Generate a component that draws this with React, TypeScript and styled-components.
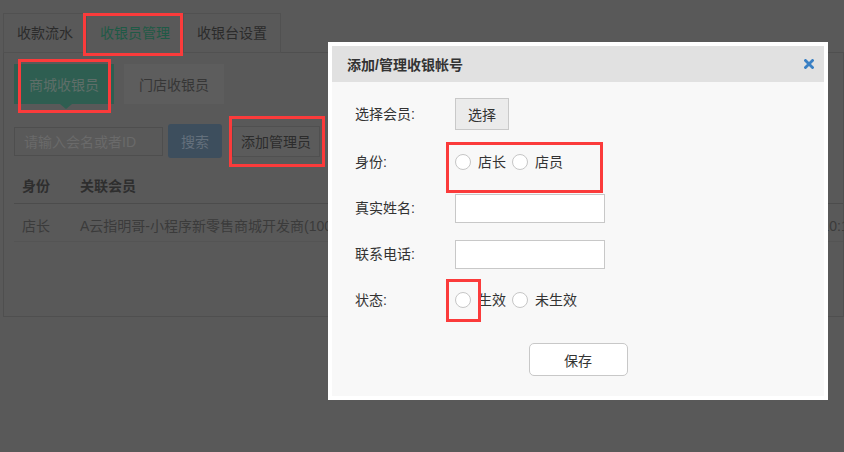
import React from "react";
import styled, { createGlobalStyle } from "styled-components";

const Global = createGlobalStyle`
  html, body { margin: 0; padding: 0; }
  body {
    width: 844px;
    height: 452px;
    overflow: hidden;
    background: #595959;
    font-family: "Liberation Sans", "Noto Sans CJK SC", sans-serif;
    font-size: 14px;
    color: #333;
  }
  * { box-sizing: border-box; }
`;

const Page = styled.div`
  position: relative;
  width: 844px;
  height: 452px;
  padding: 13px 0 0 3px;
`;

const TabBar = styled.div`
  display: flex;
  height: 40px;
  border-bottom: 1px solid #4f4f4f;
`;

const Tab = styled.div<{ $active?: boolean }>`
  height: 40px;
  padding: 0 13px;
  display: flex;
  align-items: center;
  border: 1px solid #515151;
  border-bottom-color: ${(p) => (p.$active ? "#595959" : "#515151")};
  margin-right: -1px;
  color: ${(p) => (p.$active ? "#1f5a46" : "#2b2b2b")};
  line-height: 16px;
`;

const Panel = styled.div`
  border: 1px solid #4f4f4f;
  border-top: none;
  height: 264px;
  padding: 11px 0 0 10px;
`;

const SubTabs = styled.div`
  display: flex;
  gap: 10px;
  margin-bottom: 20px;
`;

const SubTab = styled.div<{ $active?: boolean }>`
  position: relative;
  width: 100px;
  height: 40px;
  display: flex;
  align-items: center;
  justify-content: center;
  background: ${(p) => (p.$active ? "#2e5e51" : "#5d5d5d")};
  color: ${(p) => (p.$active ? "#5f6e69" : "#363636")};
  ${(p) =>
    p.$active &&
    `&::after {
      content: "";
      position: absolute;
      left: 46px;
      bottom: -5px;
      border-left: 6px solid transparent;
      border-right: 6px solid transparent;
      border-top: 5px solid #2e5e51;
    }`}
`;

const SearchRow = styled.div`
  display: flex;
  align-items: center;
  height: 34px;
`;

const SearchInput = styled.div`
  width: 149px;
  height: 29px;
  border: 1px solid #4e4e4e;
  padding: 0 9px;
  display: flex;
  align-items: center;
  color: #6a6a6a;
  font-size: 14px;
  margin-right: 5px;
`;

const SearchButton = styled.div`
  width: 54px;
  height: 34px;
  border-radius: 3px;
  background: #3d4e5d;
  color: #64707c;
  display: flex;
  align-items: center;
  justify-content: center;
  margin-right: 10px;
`;

const AddButton = styled.div`
  width: 88px;
  height: 31px;
  border: 1px solid #505050;
  background: #5b5b5b;
  color: #2c2c2c;
  display: flex;
  align-items: center;
  justify-content: center;
`;

const Table = styled.div`
  margin-top: 11px;
  width: 100%;
`;

const TRow = styled.div<{ $head?: boolean }>`
  display: grid;
  grid-template-columns: 58px 666px 1fr;
  height: ${(p) => (p.$head ? "35px" : "38px")};
  align-items: ${(p) => (p.$head ? "center" : "start")};
  padding-top: ${(p) => (p.$head ? "0" : "14px")};
  border-bottom: 1px solid ${(p) => (p.$head ? "#4c4c4c" : "#545454")};
  font-weight: ${(p) => (p.$head ? 700 : 400)};
  color: ${(p) => (p.$head ? "#2e2e2e" : "#3b3b3b")};
  line-height: 16px;
  white-space: nowrap;
`;

const Cell = styled.div`
  padding-left: 8px;
  overflow: visible;
`;

/* ---------- Modal ---------- */

const Modal = styled.div`
  position: absolute;
  left: 328px;
  top: 42px;
  width: 500px;
  height: 358px;
  background: #ffffff;
  padding: 4px;
`;

const ModalInner = styled.div`
  height: 100%;
  background: #f8f8f8;
  display: flex;
  flex-direction: column;
`;

const ModalHeader = styled.div`
  height: 36px;
  background: #e1e1e1;
  display: flex;
  align-items: center;
  justify-content: space-between;
  padding: 0 10px 0 15px;
`;

const ModalTitle = styled.div`
  font-weight: 700;
  font-size: 14px;
  color: #333;
`;

const Close = styled.svg`
  display: block;
  width: 10px;
  height: 10px;
`;

const Form = styled.div`
  padding: 16px 0 0 23px;
  display: flex;
  flex-direction: column;
  gap: 14px;
`;

const FormRow = styled.div<{ $extra?: number }>`
  display: flex;
  align-items: center;
  height: 32px;
  margin-bottom: ${(p) => p.$extra ?? 0}px;
`;

const Label = styled.div`
  width: 100px;
  color: #333;
  line-height: 16px;
`;

const PickButton = styled.div`
  width: 54px;
  height: 32px;
  border: 1px solid #c9c9c9;
  background: #ebebeb;
  display: flex;
  align-items: center;
  justify-content: center;
  color: #333;
`;

const TextInput = styled.div`
  width: 150px;
  height: 29px;
  background: #fff;
  border: 1px solid #c8c8c8;
`;

const RadioGroup = styled.div`
  display: flex;
  align-items: center;
`;

const Radio = styled.span<{ $first?: boolean }>`
  width: 16px;
  height: 16px;
  border-radius: 50%;
  border: 1px solid #c6c6c6;
  background: #fff;
  margin-left: ${(p) => (p.$first ? "0" : "6px")};
  margin-right: 7px;
  flex: none;
`;

const RadioText = styled.span`
  color: #333;
  line-height: 16px;
`;

const Footer = styled.div`
  display: flex;
  justify-content: center;
  margin-top: 27px;
`;

const SaveButton = styled.div`
  width: 99px;
  height: 33px;
  background: #fff;
  border: 1px solid #c8c8c8;
  border-radius: 5px;
  display: flex;
  align-items: center;
  justify-content: center;
  color: #333;
`;

/* ---------- Annotations ---------- */

const Mark = styled.div<{ $x: number; $y: number; $w: number; $h: number }>`
  position: absolute;
  left: ${(p) => p.$x}px;
  top: ${(p) => p.$y}px;
  width: ${(p) => p.$w}px;
  height: ${(p) => p.$h}px;
  border: 3px solid #fb3b3b;
  pointer-events: none;
`;

export default function App() {
  return (
    <>
      <Global />
      <Page>
        <TabBar>
          <Tab>收款流水</Tab>
          <Tab $active>收银员管理</Tab>
          <Tab>收银台设置</Tab>
        </TabBar>
        <Panel>
          <SubTabs>
            <SubTab $active>商城收银员</SubTab>
            <SubTab>门店收银员</SubTab>
          </SubTabs>
          <SearchRow>
            <SearchInput>请输入会名或者ID</SearchInput>
            <SearchButton>搜索</SearchButton>
            <AddButton>添加管理员</AddButton>
          </SearchRow>
          <Table>
            <TRow $head>
              <Cell>身份</Cell>
              <Cell>关联会员</Cell>
              <Cell></Cell>
            </TRow>
            <TRow>
              <Cell>店长</Cell>
              <Cell>A云指明哥-小程序新零售商城开发商(10086)</Cell>
              <Cell>2019-05-28 10:12:36</Cell>
            </TRow>
          </Table>
        </Panel>

        <Modal>
          <ModalInner>
            <ModalHeader>
              <ModalTitle>添加/管理收银帐号</ModalTitle>
              <Close viewBox="0 0 10 10">
                <path d="M1.5 1.5 L8.5 8.5 M8.5 1.5 L1.5 8.5" stroke="#3a80c4" strokeWidth="2.8" strokeLinecap="square" />
              </Close>
            </ModalHeader>
            <Form>
              <FormRow $extra={2}>
                <Label>选择会员:</Label>
                <PickButton>选择</PickButton>
              </FormRow>
              <FormRow>
                <Label>身份:</Label>
                <RadioGroup>
                  <Radio $first />
                  <RadioText>店长</RadioText>
                  <Radio />
                  <RadioText>店员</RadioText>
                </RadioGroup>
              </FormRow>
              <FormRow>
                <Label>真实姓名:</Label>
                <TextInput />
              </FormRow>
              <FormRow>
                <Label>联系电话:</Label>
                <TextInput />
              </FormRow>
              <FormRow>
                <Label>状态:</Label>
                <RadioGroup>
                  <Radio $first />
                  <RadioText>生效</RadioText>
                  <Radio />
                  <RadioText>未生效</RadioText>
                </RadioGroup>
              </FormRow>
            </Form>
            <Footer>
              <SaveButton>保存</SaveButton>
            </Footer>
          </ModalInner>
        </Modal>

        <Mark $x={83} $y={13} $w={100} $h={43} />
        <Mark $x={18} $y={59} $w={93} $h={54} />
        <Mark $x={229} $y={116} $w={96} $h={51} />
        <Mark $x={446} $y={142} $w={157} $h={51} />
        <Mark $x={446} $y={279} $w={35} $h={43} />
      </Page>
    </>
  );
}
